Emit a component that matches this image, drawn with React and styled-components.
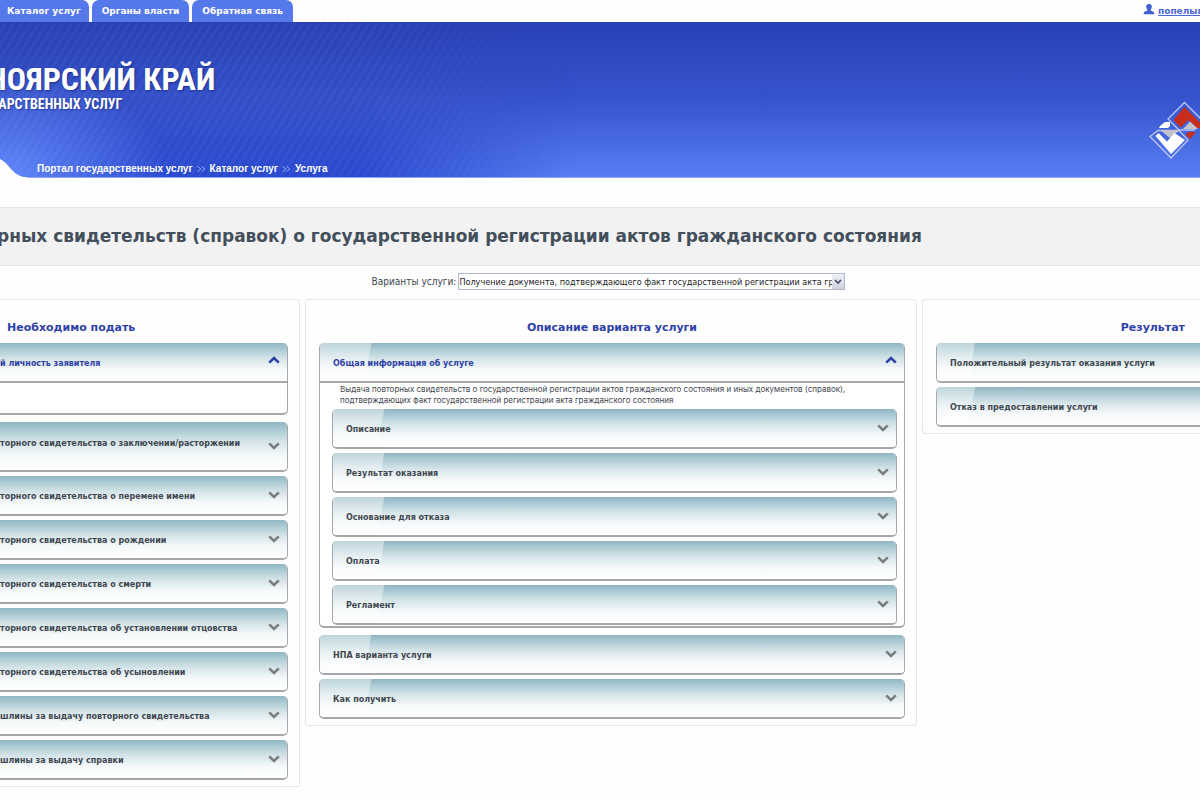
import React, { useState } from "react";
import styled, { createGlobalStyle, css } from "styled-components";

const GlobalStyle = createGlobalStyle`
  *, *::before, *::after { box-sizing: border-box; }
  body { margin: 0; background: #fefefe; overflow-x: hidden; font-family: "DejaVu Sans", Verdana, sans-serif; color: #3f474f; }
  h1, h2, h3, p { margin: 0; }
`;

const TopBar = styled.div`
  display: flex;
  justify-content: space-between;
  height: 22px;
  overflow: hidden;
`;

const Tabs = styled.nav`
  display: flex;
  gap: 3px;
`;

const Tab = styled.a`
  display: flex;
  align-items: center;
  height: 22px;
  padding: 0 10px;
  border-radius: 0 7px 0 0;
  background: #5578ea;
  color: #fff;
  font-size: 9px;
  font-weight: bold;
  text-decoration: none;
  white-space: nowrap;
  & + & { border-radius: 7px 7px 0 0; }
  &:first-child { padding: 0 8px 0 7px; }
`;

const User = styled.a`
  display: flex;
  align-items: center;
  gap: 3px;
  width: 57px;
  overflow: hidden;
  color: #4a66d8;
  font-size: 9px;
  font-weight: bold;
  text-decoration: none;
  white-space: nowrap;
  svg { flex: none; }
  span { text-decoration: underline; }
`;

const Header = styled.header`
  position: relative;
  display: flex;
  flex-direction: column;
  justify-content: space-between;
  height: 156px;
  overflow: hidden;
  background: linear-gradient(#2841b6, #3654cd 50%, #587ef3);
  &::before {
    content: "";
    position: absolute;
    inset: 0;
    background:
      repeating-linear-gradient(122deg, rgba(255,255,255,0) 0 4px, rgba(255,255,255,.03) 4px 7px),
      radial-gradient(ellipse 170px 110px at 0 100%, #6389fb, rgba(99,137,251,0)),
      linear-gradient(#2840b4, #3450c8 50%, #2a49d0);
    mask-image: linear-gradient(to right, #000 360px, transparent 570px);
  }
  &::after {
    content: "";
    position: absolute;
    inset: auto 0 0;
    height: 1px;
    background: #8ba4f3;
  }
`;

const HeaderRow = styled.div`
  position: relative;
  display: flex;
  justify-content: space-between;
`;

const Brand = styled.div`
  margin: 40px 0 0 -13px;
  font-family: "Roboto Condensed", "Open Sans Condensed", Roboto, sans-serif;
  font-weight: bold;
  color: #fff;
  white-space: nowrap;
  text-shadow: 1px 1px 2px rgba(10,20,90,.5);
`;

const BrandName = styled.div`
  font-size: 32px;
  line-height: 34px;
`;

const BrandSub = styled.div`
  padding-left: 2px;
  font-size: 14px;
  line-height: 16px;
`;

const Emblem = styled.svg`
  margin-top: 79px;
  flex: none;
`;

const Crumbs = styled.nav`
  position: relative;
  display: flex;
  align-items: center;
  gap: 4px;
  height: 20px;
  padding-left: 37px;
  font: bold 10px/20px "Liberation Sans", Arial, sans-serif;
  a { color: #fff; text-decoration: none; }
`;

const Corner = styled.svg`
  position: absolute;
  z-index: 1;
  left: 0;
  bottom: 0;
`;

const TitleBand = styled.div`
  margin-top: 29px;
  padding: 16px 0;
  overflow: hidden;
  background: #f2f2f2;
  border: solid #e4e4e4;
  border-width: 1px 0;
`;

const Title = styled.h1`
  margin-left: -3px;
  font-size: 17px;
  line-height: 25px;
  color: #434f5b;
  white-space: nowrap;
`;

const VariantRow = styled.div`
  display: flex;
  align-items: center;
  justify-content: center;
  gap: 2px;
  height: 33px;
  padding: 0 0 2px 17px;
  font-family: "DejaVu Sans Condensed", "DejaVu Sans", sans-serif;
  font-size: 10px;
`;

const SelectBox = styled.div`
  position: relative;
  width: 387px;
`;

const Select = styled.select`
  display: block;
  width: 100%;
  height: 17px;
  padding: 0 12px 0 0;
  appearance: none;
  border: 1px solid #b4b7d0;
  border-radius: 0;
  background: #fff;
  color: #222;
  font: 9px "DejaVu Sans Condensed", "DejaVu Sans", sans-serif;
`;

const SelectArrow = styled.span`
  position: absolute;
  top: 1px;
  right: 1px;
  display: flex;
  align-items: center;
  justify-content: center;
  width: 12px;
  height: 15px;
  background: linear-gradient(#eef0f5, #cfd1db);
  pointer-events: none;
`;

const Columns = styled.main`
  display: grid;
  grid-template-columns: 300fr 612fr 278fr;
  gap: 5px;
  align-items: start;
`;

const Column = styled.section`
  min-width: 0;
  padding: 17px 11px 6px 13px;
  border: 1px solid #e6e6e8;
  border-radius: 3px;
  ${(p) => p.$edge === "left" && css`padding-left: 0; border-left: 0; border-radius: 0 3px 3px 0;`}
  ${(p) => p.$edge === "right" && css`padding-right: 0; border-right: 0; border-radius: 3px 0 0 3px;`}
`;

const ColumnTitle = styled.h2`
  margin-bottom: 4px;
  font-size: 11px;
  line-height: 22px;
  color: #2f41a6;
  text-align: center;
  ${(p) => p.$edge === "left" && css`padding-left: 7px; text-align: left;`}
  ${(p) => p.$edge === "right" && css`padding-right: 15px; text-align: right;`}
`;

const Stack = styled.div`
  display: flex;
  flex-direction: column;
  gap: 4px;
`;

const Panel = styled.div`
  overflow: hidden;
  border: solid #a5a7aa;
  border-width: 0 1px 2px;
  border-radius: 5px;
  background: #fff;
  ${(p) => p.$open && css`margin-bottom: 3px;`}
  ${(p) => p.$edge === "left" && css`border-left: 0; border-radius: 0 5px 5px 0;`}
  ${(p) => p.$edge === "right" && css`border-right: 0; border-radius: 5px 0 0 5px;`}
`;

const gloss = (end) => `linear-gradient(100deg, rgba(255,255,255,.42) ${end - 1}px, rgba(255,255,255,0) ${end}px),`;

const PanelHead = styled.button`
  display: flex;
  align-items: center;
  justify-content: space-between;
  width: 100%;
  height: ${(p) => (p.$tall ? 48 : 38)}px;
  padding: 0 7px 0 ${(p) => (p.$edge === "left" ? 0 : 13)}px;
  border: 0;
  background:
    ${(p) => p.$edge !== "left" && gloss(p.$edge === "right" ? 38 : 51)}
    linear-gradient(#8fb5c2, #a9c8d2 15%, #d3e3e8 40%, #f6f9fa 70%, #fff);
  color: ${(p) => (p.$open ? "#2f41a6" : "#3f474f")};
  font: bold 8px "DejaVu Sans", Verdana, sans-serif;
  text-align: left;
  white-space: nowrap;
  cursor: pointer;
  span { padding: 2px 0 ${(p) => (p.$tall ? 8 : 0)}px; }
  svg { flex: none; margin-bottom: ${(p) => (p.$open ? 4 : 1)}px; }
`;

const PanelBody = styled.div`
  min-height: 32px;
  border-top: 2px solid #a5a7aa;
  padding: ${(p) => (p.$filled ? "1px 7px 1px 12px" : "0")};
`;

const Note = styled.p`
  padding: 0 8px;
  margin-bottom: 3px;
  font-family: Inter, "DejaVu Sans", sans-serif;
  font-size: 8px;
  line-height: 11px;
`;

function Chevron({ up }) {
  return (
    <svg width="12" height="8" viewBox="0 0 12 8" aria-hidden="true">
      <path d={up ? "M1.200 6.600 6 2l4.800 4.600" : "M1.200 1.400 6 6l4.800-4.600"} fill="none" stroke={up ? "#2f41a6" : "#7b7e80"} strokeWidth="2.600" />
    </svg>
  );
}

function Accordion({ title, edge, tall, opened, children }) {
  const [open, setOpen] = useState(Boolean(opened));
  return (
    <Panel $edge={edge} $open={open}>
      <PanelHead type="button" aria-expanded={open} $open={open} $edge={edge} $tall={tall} onClick={() => setOpen(!open)}>
        <span>{title}</span>
        {edge !== "right" && <Chevron up={open} />}
      </PanelHead>
      {open && <PanelBody $filled={Boolean(children)}>{children}</PanelBody>}
    </Panel>
  );
}

const documents = [
  "торного свидетельства о перемене имени",
  "торного свидетельства о рождении",
  "торного свидетельства о смерти",
  "торного свидетельства об установлении отцовства",
  "торного свидетельства об усыновлении",
  "шлины за выдачу повторного свидетельства",
  "шлины за выдачу справки",
];

const details = ["Описание", "Результат оказания", "Основание для отказа", "Оплата", "Регламент"];

function Separator() {
  return (
    <svg width="9" height="6" viewBox="0 0 9 6" aria-hidden="true">
      <path d="M.5.5 4 3 .5 5.500M4.500.5 8 3 4.500 5.500" fill="none" stroke="#8fa6f2" />
    </svg>
  );
}

export default function App() {
  return (
    <>
      <GlobalStyle />
      <TopBar>
        <Tabs>
          <Tab href="#catalog">Каталог услуг</Tab>
          <Tab href="#authorities">Органы власти</Tab>
          <Tab href="#feedback">Обратная связь</Tab>
        </Tabs>
        <User href="#profile">
          <svg width="12" height="14" viewBox="0 0 12 14" aria-hidden="true">
            <path d="M6 0a2.800 2.800 0 0 1 2.800 2.900c0 1.200-.6 2-1.200 2.600v1L10 7.500c1 .5 1.300 1.500 1.300 2.700H.7C.7 9 1 8 2 7.500l2.400-1v-1C3.800 4.900 3.200 4.100 3.200 2.900A2.800 2.800 0 0 1 6 0Z" fill="#3f5fd3" />
          </svg>
          <span>попелыш</span>
        </User>
      </TopBar>
      <Header>
        <HeaderRow>
          <Brand>
            <BrandName>НОЯРСКИЙ КРАЙ</BrandName>
            <BrandSub>ДАРСТВЕННЫХ УСЛУГ</BrandSub>
          </Brand>
          <Emblem width="51" height="58" viewBox="0 0 51 58" aria-hidden="true">
            <path d="M11 25 16 21h5v4l-2 2h-9Z" fill="#fff" />
            <path d="M35.500 1.500 54 20 45 29H30L19 18Z" fill="none" stroke="#b9c5ee" strokeWidth="1.300" />
            <path d="M35.500 6 51 21.500V27h-3l-8.500-8-8 7.500-7-7.500Z" fill="#c62d1b" />
            <path d="M41 20.500 49 28H34Z" fill="#c3c3c9" />
            <path d="M39 31h8l-6 7-4-4Z" fill="#c62d1b" />
            <path d="M9 29.500h21l9 9.500-17 18L1 35.500Z" fill="none" stroke="#b9c5ee" strokeWidth="1.300" />
            <path d="M11 29h20l-10 8Z" fill="#c3c3c9" />
            <path d="M6.500 35 9.500 32 18 40.500l7.500-8.500L36 39 22 53Z" fill="#fff" />
          </Emblem>
        </HeaderRow>
        <Corner width="28" height="19" viewBox="0 0 28 19" aria-hidden="true">
          <path d="M0 0C6 3 8 7 13 12s9 6 15 6.500V19H0Z" fill="#fefefe" />
        </Corner>
        <Crumbs>
          <a href="#portal">Портал государственных услуг</a>
          <Separator />
          <a href="#catalog">Каталог услуг</a>
          <Separator />
          <a href="#service">Услуга</a>
        </Crumbs>
      </Header>
      <TitleBand>
        <Title>рных свидетельств (справок) о государственной регистрации актов гражданского состояния</Title>
      </TitleBand>
      <VariantRow>
        <label htmlFor="variant">Варианты услуги:</label>
        <SelectBox>
          <Select id="variant">
            <option>Получение документа, подтверждающего факт государственной регистрации акта гр</option>
          </Select>
          <SelectArrow>
            <svg width="8" height="6" viewBox="0 0 8 6" aria-hidden="true">
              <path d="M1 1l3 3 3-3" fill="none" stroke="#3f4576" strokeWidth="1.600" />
            </svg>
          </SelectArrow>
        </SelectBox>
      </VariantRow>
      <Columns>
        <Column $edge="left">
          <ColumnTitle $edge="left">Необходимо подать</ColumnTitle>
          <Stack>
            <Accordion edge="left" title="й личность заявителя" opened />
            <Accordion edge="left" title="торного свидетельства о заключении/расторжении" tall />
            {documents.map((d) => <Accordion key={d} edge="left" title={d} />)}
          </Stack>
        </Column>
        <Column>
          <ColumnTitle>Описание варианта услуги</ColumnTitle>
          <Stack>
            <Accordion title="Общая информация об услуге" opened>
              <Note>
                Выдача повторных свидетельств о государственной регистрации актов гражданского состояния и иных документов (справок), подтверждающих факт государственной регистрации акта гражданского состояния
              </Note>
              <Stack>
                {details.map((d) => <Accordion key={d} title={d} />)}
              </Stack>
            </Accordion>
            <Accordion title="НПА варианта услуги" />
            <Accordion title="Как получить" />
          </Stack>
        </Column>
        <Column $edge="right">
          <ColumnTitle $edge="right">Результат</ColumnTitle>
          <Stack>
            <Accordion edge="right" title="Положительный результат оказания услуги" />
            <Accordion edge="right" title="Отказ в предоставлении услуги" />
          </Stack>
        </Column>
      </Columns>
    </>
  );
}
